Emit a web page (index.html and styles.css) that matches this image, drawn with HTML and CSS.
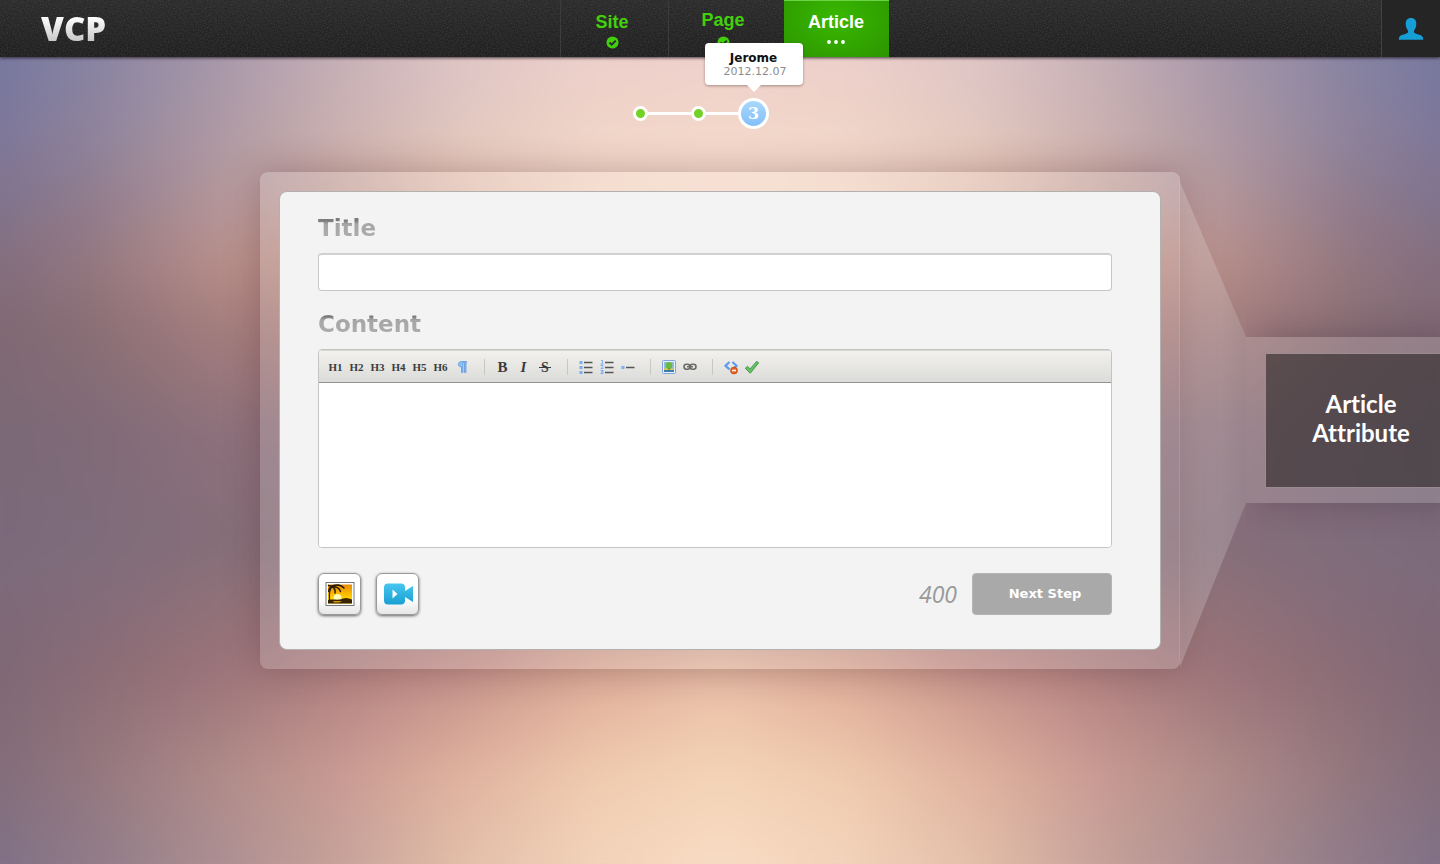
FILE: index.html
```html
<!DOCTYPE html>
<html lang="en">
<head>
<meta charset="utf-8">
<title>VCP - Article</title>
<link rel="stylesheet" href="styles.css">
</head>
<body>
<div class="backdrop" aria-hidden="true">
  <div class="mesh">
    <div class="band band-10"></div>
    <div class="band band-9"></div>
    <div class="band band-8"></div>
    <div class="band band-7"></div>
    <div class="band band-6"></div>
    <div class="band band-5"></div>
    <div class="band band-4"></div>
    <div class="band band-3"></div>
    <div class="band band-2"></div>
    <div class="band band-1"></div>
  </div>
</div>
<header class="topbar">
  <a class="logo" href="#">VCP</a>
  <nav class="tabs">
    <a class="tab tab-site" href="#">Site
      <svg class="tick" viewBox="0 0 14 14"><circle cx="7" cy="7" r="6.5" fill="#43d00c"/><path d="M3.8 7l2.4 2.4 4.3-4.5" fill="none" stroke="#292929" stroke-width="2"/></svg>
    </a>
    <a class="tab tab-page" href="#">Page
      <svg class="tick" viewBox="0 0 14 14"><circle cx="7" cy="7" r="6.5" fill="#43d00c"/><path d="M3.8 7l2.4 2.4 4.3-4.5" fill="none" stroke="#292929" stroke-width="2"/></svg>
    </a>
    <a class="tab tab-article" href="#" aria-current="page">Article
      <svg class="more" viewBox="0 0 18 4"><g fill="#fff"><circle cx="2" cy="2" r="1.9"/><circle cx="9" cy="2" r="1.9"/><circle cx="16" cy="2" r="1.9"/></g></svg>
    </a>
  </nav>
  <button class="user" type="button" aria-label="Account">
    <svg width="26" height="24" viewBox="0 0 26 24"><path d="M13 1c3.600 0 5.300 2.300 5.300 5.700 0 2.900-1 5.300-2.300 6.800v2c1.200 1.300 4 1.700 6.200 2.500 2.200.8 3 2 3 4.700H.8c0-2.700.8-3.900 3-4.700 2.200-.8 5-1.200 6.200-2.500v-2C8.700 12 7.700 9.600 7.700 6.700 7.700 3.300 9.400 1 13 1z" fill="#159fd6"/></svg>
  </button>
</header>

<div class="steps">
  <span class="dot"></span><span class="line"></span><span class="dot"></span><span class="line line-short"></span>
  <div class="current">3
    <div class="tip"><strong>Jerome</strong><span>2012.12.07</span></div>
  </div>
</div>

<main class="stage">
  <section class="frame">
    <form class="card">
      <label class="heading" for="title">Title</label>
      <input class="title-input" id="title" type="text">
      <label class="heading heading-content" for="content">Content</label>
      <div class="editor">
        <div class="toolbar">
          <div class="group">
            <button type="button">H1</button><button type="button">H2</button><button type="button">H3</button><button type="button">H4</button><button type="button">H5</button><button type="button">H6</button>
            <button type="button" aria-label="Paragraph"><svg width="16" height="16" viewBox="0 0 16 16"><path d="M7.500 2.500h5v1H12v10h-1.500v-10H9v10H7.500V8C5.500 8 4.400 7 4.400 5.300c0-1.800 1.200-2.800 3.100-2.800z" fill="#8cc0f8" stroke="#558fdc" stroke-width=".7"/></svg></button>
          </div>
          <div class="group">
            <button class="big" type="button">B</button><button class="big italic" type="button">I</button><button class="big" type="button" aria-label="Strikethrough"><svg width="16" height="16" viewBox="0 0 16 16"><text class="s-glyph" x="8" y="13" text-anchor="middle">S</text><path d="M2 8.500h12" stroke="#3c3c3c" stroke-width="1.200"/></svg></button>
          </div>
          <div class="group">
            <button type="button" aria-label="Bulleted list"><svg width="16" height="16" viewBox="0 0 16 16"><path d="M1.500 2h3v3h-3zM1.500 7h3v3h-3zM1.500 12h3v3h-3z" fill="#79acf0"/><path d="M6 3.500h8.500M6 8.500h8.500M6 13.500h8.500" stroke="#555" stroke-width="1.500"/></svg></button>
            <button type="button" aria-label="Numbered list"><svg width="16" height="16" viewBox="0 0 16 16"><path d="M2 1.500h1.500v3M1.500 5h3M1.500 6.500h2.500v1L2 9.500h2.500M1.500 11.500h2.500v3H1.500M2 13h2" fill="none" stroke="#79acf0"/><path d="M6 3.500h8.500M6 8.500h8.500M6 13.500h8.500" stroke="#555" stroke-width="1.500"/></svg></button>
            <button type="button" aria-label="List item"><svg width="16" height="16" viewBox="0 0 16 16"><path d="M1.500 7h3v3h-3z" fill="#79acf0"/><path d="M6 8.500h8.500" stroke="#555" stroke-width="1.500"/></svg></button>
          </div>
          <div class="group">
            <button type="button" aria-label="Picture"><svg width="16" height="16" viewBox="0 0 16 16"><rect x="1.500" y="1.500" width="13" height="13" rx="1" fill="#eaf2fc" stroke="#7fa3dc"/><path d="M3 3h10v10H3z" fill="#8fbbe8"/><path d="M3 9.500c3-1 7 0 10 0V11H3z" fill="#d8c558"/><path d="M3 11h10v2H3z" fill="#3f79b8"/><circle cx="8" cy="6.500" r="3.400" fill="#6cb843"/><path d="M7.500 9h1v3h-1z" fill="#4a8c2c"/></svg></button>
            <button type="button" aria-label="Link"><svg width="16" height="16" viewBox="0 0 16 16"><g fill="none" stroke="#6a6a6a" stroke-width="1.600"><rect x="2" y="5.200" width="6" height="5" rx="2.500"/><rect x="8" y="5.200" width="6" height="5" rx="2.500"/><path d="M5 7.700h6"/></g></svg></button>
          </div>
          <div class="group">
            <button type="button" aria-label="Clean code"><svg width="16" height="16" viewBox="0 0 16 16"><path d="M6.500 3L2.500 6.700l4 3.700M9.500 3l4 3.700-2 2" fill="none" stroke="#5b9deb" stroke-width="2.200"/><circle cx="11" cy="11.500" r="3.500" fill="#e8601f" stroke="#b7430d" stroke-width=".6"/><path d="M9 11.500h4" stroke="#fff" stroke-width="1.400"/></svg></button>
            <button type="button" aria-label="Preview"><svg width="16" height="16" viewBox="0 0 16 16"><path d="M1.300 9.200l2.200-2 2.600 2.700L12.600 2.400l2.100 1.400L6.300 14.200z" fill="#68c066" stroke="#2f8a35" stroke-width=".8"/></svg></button>
          </div>
        </div>
        <textarea class="content-input" id="content"></textarea>
      </div>
      <div class="actions">
        <button class="media" type="button" aria-label="Add photo">
          <svg width="30" height="26" viewBox="0 0 30 26"><defs><linearGradient id="sky" x1="0" y1="0" x2="0" y2="1"><stop offset="0" stop-color="#ee8a00"/><stop offset=".75" stop-color="#ffd400"/></linearGradient></defs><rect x="1" y="1.500" width="28" height="23" fill="#fff" stroke="#777"/><rect x="3" y="3.500" width="24" height="19" fill="url(#sky)"/><circle cx="12.500" cy="17" r="4" fill="#fffbb8"/><path d="M3 19c4-1 8 0 12-.500 4-2 8-2 12 0v4H3z" fill="#3a2400"/><path d="M8 20h9l-3 1.500H9z" fill="#d99a10"/><g fill="none" stroke="#2a1c06" stroke-linecap="round"><path d="M4.500 19C4 12 4.500 8 7 5.500" stroke-width="1.200"/><path d="M7 5c4-1.500 9-1 12 2M7 5.500c4 0 7.500 2 8.500 5M7 5.500c2.500 1.500 3.500 4 3 6.500M7 5.500C5 6.500 3.800 8 3.700 10.500M3.500 4.500L8 5.500c2-1 4-1.500 6-1.500" stroke-width="1.500"/></g></svg>
        </button>
        <button class="media" type="button" aria-label="Add video">
          <svg width="30" height="24" viewBox="0 0 30 24"><defs><linearGradient id="cam" x1="0" y1="0" x2="0" y2="1"><stop offset="0" stop-color="#48c6ef"/><stop offset="1" stop-color="#189fd2"/></linearGradient></defs><path d="M5 1.500h13a4 4 0 0 1 4 4V9l8-5v16l-8-5v3.500a4 4 0 0 1-4 4H5a4 4 0 0 1-4-4v-13a4 4 0 0 1 4-4z" fill="url(#cam)"/><path d="M9.500 7.500l5 4.500-5 4.500z" fill="#fff"/></svg>
        </button>
        <output class="count" for="content">400</output>
        <button class="next" type="submit">Next Step</button>
      </div>
    </form>
  </section>
  <aside class="side">
    <svg class="fold" viewBox="0 0 66 497" preserveAspectRatio="none"><defs><linearGradient id="glass" x1="0" y1="0" x2="1" y2="0"><stop offset="0" stop-color="#fff" stop-opacity=".2"/><stop offset=".6" stop-color="#e6e6e6" stop-opacity=".22"/><stop offset="1" stop-color="#d2d2d2" stop-opacity=".2"/></linearGradient></defs><path d="M0 10L66 165V331L0 495z" fill="url(#glass)"/></svg>
    <div class="attribute-frame"><a class="attribute" href="#">Article<br>Attribute</a></div>
  </aside>
</main>
</body>
</html>
```
FILE: styles.css
```css
* { box-sizing: border-box; }

body {
  position: relative;
  margin: 0;
  min-height: 100vh;
  overflow-x: hidden;
  font-family: "DejaVu Sans", Verdana, sans-serif;
}

a { color: inherit; text-decoration: none; }
button { margin: 0; padding: 0; border: 0; background: none; font: inherit; cursor: pointer; }
svg { display: block; }

/* Soft mesh backdrop: each band is a horizontal blend that fades into the band under it.
   The mesh overhangs its box so that the blur has no pale edge. */
.backdrop { position: absolute; inset: 0; z-index: -1; overflow: hidden; }
.mesh { position: absolute; inset: -40px; filter: blur(18px); }
.band {
  position: absolute;
  inset: 0;
  background: linear-gradient(90deg, var(--a), var(--b), var(--c), var(--d), var(--e), var(--f), var(--g), var(--f), var(--e), var(--d), var(--c), var(--b), var(--a));
  mask-image: linear-gradient(#000 var(--from), transparent var(--to));
}
.band-1 { --from: 10%; --to: 18%; --a: #70739d; --b: #8683a2; --c: #a596a9; --d: #c6b0b7; --e: #dfc5c5; --f: #eccfca; --g: #efd0cb; }
.band-2 { --from: 18%; --to: 25%; --a: #77749a; --b: #8d829c; --c: #ac98a4; --d: #cbb1b0; --e: #e3c9c1; --f: #f0d5c9; --g: #f2d7ca; }
.band-3 { --from: 25%; --to: 32%; --a: #7a708e; --b: #8f7c8e; --c: #b2959a; --d: #ccaca5; --e: #e8c8b8; --f: #f4d9c8; --g: #f8dfce; }
.band-4 { --from: 32%; --to: 39%; --a: #7c6b7e; --b: #937780; --c: #b68e8a; --d: #c49589; --e: #d8ab9d; --f: #ecc4b0; --g: #f0c8b4; }
.band-5 { --from: 39%; --to: 50%; --a: #7b6772; --b: #896e75; --c: #a37d7d; --d: #b0827c; --e: #c0958b; --f: #c89c90; --g: #c89c90; }
.band-6 { --from: 50%; --to: 62%; --a: #796876; --b: #7f6a77; --c: #8c707b; --d: #927580; --e: #94727a; --f: #94727a; --g: #94727a; }
.band-7 { --from: 62%; --to: 76%; --a: #7a697c; --b: #7e6c7c; --c: #856e79; --d: #8a707a; --e: #8d6c74; --f: #94727a; --g: #94727a; }
.band-8 { --from: 76%; --to: 86%; --a: #7b6774; --b: #8a6c76; --c: #9c7479; --d: #b28382; --e: #c8948c; --f: #dfae99; --g: #eabfa7; }
.band-9 { --from: 86%; --to: 95%; --a: #7c6a78; --b: #93767e; --c: #ae8a88; --d: #c99a93; --e: #e0b39f; --f: #efcaae; --g: #f4d3b6; }
.band-10 { --a: #7a6c86; --b: #8f7b88; --c: #ab8e91; --d: #c7a29a; --e: #e4bfa9; --f: #f3d3ba; --g: #f8dcc3; mask-image: none; }

.topbar {
  position: relative;
  display: grid;
  grid-template-columns: 1fr auto 1fr;
  height: 57px;
  background:
    url("data:image/svg+xml,%3Csvg xmlns='http://www.w3.org/2000/svg' width='120' height='57'%3E%3Cfilter id='n'%3E%3CfeTurbulence type='fractalNoise' baseFrequency='.7' numOctaves='2'/%3E%3CfeColorMatrix values='0 0 0 0 1 0 0 0 0 1 0 0 0 0 1 .16 0 0 0 -.04'/%3E%3C/filter%3E%3Crect width='120' height='57' filter='url(%23n)'/%3E%3C/svg%3E"),
    linear-gradient(#272727, #1c1c1c);
  box-shadow: 0 1px 3px rgba(30, 20, 30, .8);
}
.logo {
  align-self: center;
  justify-self: start;
  margin-left: 41px;
  font: 800 33px/40px "Open Sans", sans-serif;
  color: transparent;
  background: linear-gradient(#fff 20%, #c8c8c8 80%);
  background-clip: text;
}
.tabs { display: flex; margin-left: 8px; font: bold 18px/20px "Liberation Sans", Arial, sans-serif; color: #43d00c; }
.tab { display: flex; flex-direction: column; align-items: center; padding-top: 12px; gap: 4px; border-left: 1px solid #3c3c3c; }
.tick { width: 13px; height: 13px; }
.tab-site { width: 108px; padding-right: 4px; }
.tab-page { width: 116px; padding-right: 6px; padding-top: 10px; gap: 6px; }
.tab-article {
  width: 105px;
  color: #fff;
  border: 0;
  border-top: 1px solid #6bd445;
  padding-top: 11px;
  gap: 8px;
  background: radial-gradient(ellipse at 50% 30%, #39b800, #2c9500);
}
.more { width: 18px; height: 4px; }
.user {
  justify-self: end;
  display: grid;
  place-items: center;
  width: 59px;
  border-left: 1px solid #424242;
  background: #252525;
}

.steps { display: flex; align-items: center; justify-content: center; height: 31px; margin-top: 41px; padding-right: 38px; }
.dot { width: 15px; height: 15px; border: 3px solid #fff; border-radius: 50%; background: #74d126; }
.line { width: 43px; height: 3px; background: #fff; }
.line-short { width: 32px; }
.current {
  position: relative;
  display: grid;
  place-items: center;
  width: 31px;
  height: 31px;
  border: 3px solid #fff;
  border-radius: 50%;
  background: linear-gradient(#a8d8fb, #83bffa);
  color: #fff;
  font: bold 16px/20px "DejaVu Serif", Georgia, serif;
}
.tip {
  position: absolute;
  bottom: 41px;
  left: 50%;
  transform: translateX(-50%);
  display: flex;
  flex-direction: column;
  align-items: center;
  width: 98px;
  padding: 9px 0 7px;
  border-radius: 4px;
  background: #fff;
  box-shadow: 0 1px 3px rgba(60, 30, 30, .4);
  color: #111;
  font: 11px/13px "DejaVu Sans", Verdana, sans-serif;
}
.tip strong { font-size: 12px; }
.tip span { color: #8c8c8c; padding-left: 3px; }
.tip::after {
  content: "";
  position: absolute;
  top: 100%;
  left: 50%;
  margin-left: -7px;
  border: 7px solid transparent;
  border-top-color: #fff;
  border-bottom: 0;
}

.stage { display: grid; grid-template-columns: 1fr minmax(0, 920px) 1fr; margin-top: 43px; margin-bottom: 40px; }
.frame {
  grid-column: 2;
  padding: 19px;
  border-radius: 8px;
  background: rgba(255, 255, 255, .16);
  box-shadow: 0 0 36px rgba(70, 30, 35, .3), inset -1px 0 rgba(255, 255, 255, .12);
}
.card {
  display: flex;
  flex-direction: column;
  padding: 22px 48px 34px 38px;
  border: 1px solid #b3b0b0;
  border-radius: 8px;
  background: #f3f3f3;
}
.heading {
  align-self: flex-start;
  margin-bottom: 11px;
  font-size: 23px;
  font-weight: bold;
  line-height: 28px;
  color: transparent;
  background: linear-gradient(#7c7c7c 24%, #a6a6a6 36%, #ababab 80%);
  background-clip: text;
}
.heading-content { margin-top: 19px; }
.title-input { height: 38px; padding: 0 12px; border: 1px solid #c6c6c6; border-top: 2px solid #d0d0d0; border-radius: 4px; background: #fff; font: 16px "DejaVu Sans", sans-serif; }
.editor { display: flex; flex-direction: column; border: 1px solid #c4c4c4; border-radius: 4px; overflow: hidden; background: #fff; }
.toolbar {
  display: flex;
  align-items: center;
  height: 33px;
  padding-left: 6px;
  border-top: 1px solid #d6d7cf;
  border-bottom: 1px solid #939393;
  background: linear-gradient(#f2f1ed, #dbdbd9);
}
.group { display: flex; align-items: center; height: 16px; margin-right: 7px; padding-right: 12px; border-right: 1px solid #c8c8c3; }
.group:last-child { border: 0; }
.group button { display: grid; place-items: center; width: 21px; height: 16px; font: bold 11px/16px "Liberation Serif", serif; color: #3c3c3c; }
.group .big { font-size: 15px; }
.group .italic { font-style: italic; }
.s-glyph { font: bold 14px "Liberation Serif", serif; fill: #3c3c3c; }
.content-input { height: 164px; padding: 12px; border: 0; resize: none; font: 14px/20px "DejaVu Sans", sans-serif; }
.actions { display: flex; align-items: center; gap: 15px; margin-top: 25px; }
.media {
  display: grid;
  place-items: center;
  width: 43px;
  height: 42px;
  border: 1px solid #9a9a9a;
  border-radius: 6px;
  background: linear-gradient(#fff 60%, #e6e6e6);
  box-shadow: 0 1px 3px rgba(0, 0, 0, .6);
}
.count { margin-left: auto; color: #999; font: italic 23px/28px "Open Sans", sans-serif; }
.next {
  width: 140px;
  height: 42px;
  padding: 0 0 2px 6px;
  border: 1px solid #b4b4b4;
  border-radius: 4px;
  background: #a9a9a9;
  color: #fff;
  font-size: 13px;
  font-weight: bold;
}

.side { display: flex; align-items: center; min-width: 0; }
.fold { flex: none; align-self: stretch; width: 66px; height: 100%; }
.attribute-frame {
  flex: 1;
  margin-bottom: 2px;
  padding: 16px 0 15px 19px;
  background: rgba(255, 255, 255, .15);
  box-shadow: 12px 0 32px rgba(50, 30, 45, .3);
  clip-path: inset(-40px -40px -40px 0);
}
.attribute {
  display: grid;
  place-content: center;
  height: 135px;
  padding: 0 0 4px 16px;
  border: 1px solid rgba(225, 205, 210, .5);
  border-right: 0;
  background: rgba(30, 25, 25, .54);
  color: #fff;
  font: bold 24px/29px Lato, sans-serif;
  font-variant-ligatures: none;
  text-align: center;
}
```
